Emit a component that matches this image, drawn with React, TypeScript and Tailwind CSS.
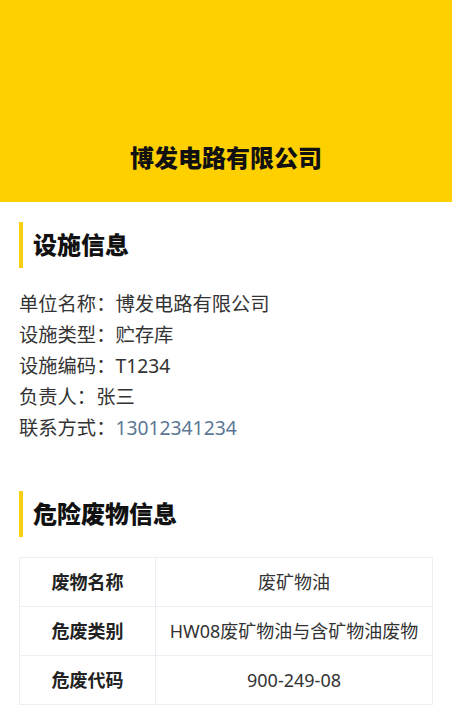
const font = { fontFamily: '"Noto Sans", "Noto Sans CJK SC", sans-serif' };

const facility = [
  { label: '单位名称', value: '博发电路有限公司' },
  { label: '设施类型', value: '贮存库' },
  { label: '设施编码', value: 'T1234' },
  { label: '负责人', value: '张三' },
  { label: '联系方式', value: '13012341234', phone: true },
];

const waste = [
  { label: '废物名称', value: '废矿物油' },
  { label: '危废类别', value: 'HW08废矿物油与含矿物油废物' },
  { label: '危废代码', value: '900-249-08' },
];

function SectionTitle({ children }: { children: React.ReactNode }) {
  return (
    <div className="flex h-[46px] items-center border-l-4 border-[#f8cf12] pl-[10px]">
      <h2 className="text-[24px] font-black leading-none text-[#111]">{children}</h2>
    </div>
  );
}

export default function App() {
  return (
    <div className="min-h-[708px] w-full bg-white" style={font}>
      <header className="flex h-[202px] flex-col justify-end bg-[#ffd000] pb-[28px]">
        <h1 className="text-center text-[24px] font-black leading-[32px] text-[#111]">博发电路有限公司</h1>
      </header>

      <section className="px-[19px] pt-[20px]">
        <SectionTitle>设施信息</SectionTitle>
        <div className="mt-[20px] flex flex-col text-[19.3px] leading-[31px] text-[#333]">
          {facility.map((row) => (
            <div key={row.label}>
              {row.label}：
              <span className={row.phone ? 'text-[#5b7896]' : ''}>{row.value}</span>
            </div>
          ))}
        </div>
      </section>

      <section className="px-[19px] pt-[48px]">
        <SectionTitle>危险废物信息</SectionTitle>
        <table className="mt-[20px] w-full border-collapse text-[18px] text-[#333]">
          <tbody>
            {waste.map((row) => (
              <tr key={row.label} className="h-[49px]">
                <td className="w-[136px] border border-[#ebeef2] text-center font-bold text-[#222]">{row.label}</td>
                <td className="border border-[#ebeef2] text-center">{row.value}</td>
              </tr>
            ))}
          </tbody>
        </table>
      </section>
    </div>
  );
}
